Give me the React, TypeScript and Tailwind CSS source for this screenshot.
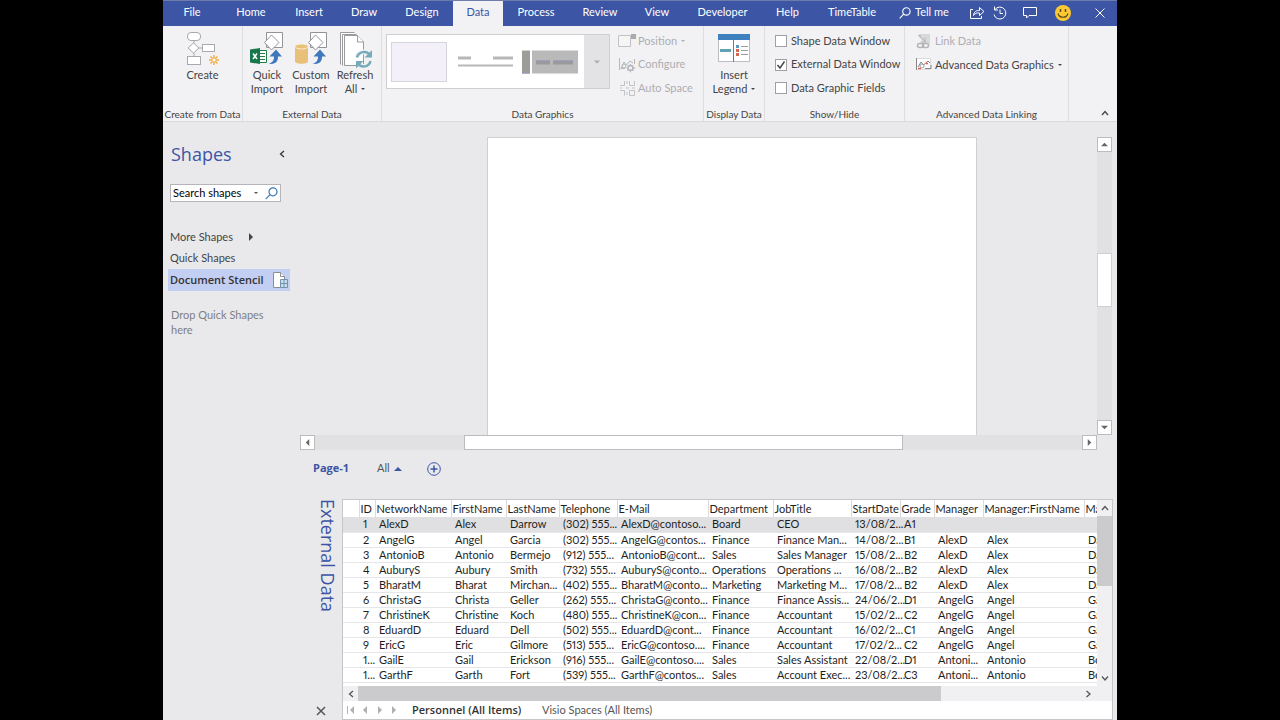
import { ReactNode, useState } from "react";

const RIBBON_TABS = [
  { label: "Home", width: "w-[60px]" },
  { label: "Insert", width: "w-[56px]" },
  { label: "Draw", width: "w-[54px]" },
  { label: "Design", width: "w-[62px]" },
  { label: "Data", width: "w-[50px]" },
  { label: "Process", width: "w-[66px]" },
  { label: "Review", width: "w-[62px]" },
  { label: "View", width: "w-[52px]" },
  { label: "Developer", width: "w-[79px]" },
  { label: "Help", width: "w-[51px]" },
  { label: "TimeTable", width: "w-[78px]" },
];

const COLUMNS = [
  { label: "", width: "w-[16px]" },
  { label: "ID", width: "w-[16px]" },
  { label: "NetworkName", width: "w-[76px]" },
  { label: "FirstName", width: "w-[55px]" },
  { label: "LastName", width: "w-[53px]" },
  { label: "Telephone", width: "w-[58px]" },
  { label: "E-Mail", width: "w-[91px]" },
  { label: "Department", width: "w-[65px]" },
  { label: "JobTitle", width: "w-[78px]" },
  { label: "StartDate", width: "w-[49px]" },
  { label: "Grade", width: "w-[34px]" },
  { label: "Manager", width: "w-[49px]" },
  { label: "Manager:FirstName", width: "w-[101px]" },
  { label: "Manager:LastName", width: "w-[101px]" },
];

const ROWS = [
  ["1", "AlexD", "Alex", "Darrow", "(302) 555...", "AlexD@contoso...", "Board", "CEO", "13/08/2...", "A1", "", "", ""],
  ["2", "AngelG", "Angel", "Garcia", "(302) 555...", "AngelG@contos...", "Finance", "Finance Man...", "14/08/2...", "B1", "AlexD", "Alex", "Darrow"],
  ["3", "AntonioB", "Antonio", "Bermejo", "(912) 555...", "AntonioB@cont...", "Sales", "Sales Manager", "15/08/2...", "B2", "AlexD", "Alex", "Darrow"],
  ["4", "AuburyS", "Aubury", "Smith", "(732) 555...", "AuburyS@conto...", "Operations", "Operations ...", "16/08/2...", "B2", "AlexD", "Alex", "Darrow"],
  ["5", "BharatM", "Bharat", "Mirchan...", "(402) 555...", "BharatM@conto...", "Marketing", "Marketing M...", "17/08/2...", "B2", "AlexD", "Alex", "Darrow"],
  ["6", "ChristaG", "Christa", "Geller", "(262) 555...", "ChristaG@conto...", "Finance", "Finance Assis...", "24/06/2...", "D1", "AngelG", "Angel", "Garcia"],
  ["7", "ChristineK", "Christine", "Koch", "(480) 555...", "ChristineK@con...", "Finance", "Accountant", "15/02/2...", "C2", "AngelG", "Angel", "Garcia"],
  ["8", "EduardD", "Eduard", "Dell", "(502) 555...", "EduardD@cont...", "Finance", "Accountant", "16/02/2...", "C1", "AngelG", "Angel", "Garcia"],
  ["9", "EricG", "Eric", "Gilmore", "(513) 555...", "EricG@contoso....", "Finance", "Accountant", "17/02/2...", "C2", "AngelG", "Angel", "Garcia"],
  ["1...", "GailE", "Gail", "Erickson", "(916) 555...", "GailE@contoso....", "Sales", "Sales Assistant", "22/08/2...", "D1", "Antoni...", "Antonio", "Bermejo"],
  ["1...", "GarthF", "Garth", "Fort", "(539) 555...", "GarthF@contos...", "Sales", "Account Exec...", "23/08/2...", "C3", "Antoni...", "Antonio", "Bermejo"],
];

const TRIANGLES = {
  up: "M0 6h8L4 2z",
  down: "M0 2h8L4 6z",
  left: "M6 0v8L2 4z",
  right: "M2 0v8l4-4z",
};

const Triangle = ({ dir, className = "size-2" }: { dir: keyof typeof TRIANGLES; className?: string }) => (
  <svg viewBox="0 0 8 8" fill="currentColor" className={`shrink-0 ${className}`} aria-hidden="true">
    <path d={TRIANGLES[dir]} />
  </svg>
);

const CHEVRONS = {
  up: "M1 6l3-3.500 3 3.500",
  down: "M1 2.500l3 3.500 3-3.500",
  left: "M6 1L2.500 4 6 7",
  right: "M2.500 1L6 4 2.500 7",
};

const Chevron = ({ dir, className = "size-2" }: { dir: keyof typeof CHEVRONS; className?: string }) => (
  <svg viewBox="0 0 8 8" fill="none" stroke="currentColor" strokeWidth="1.3" className={`shrink-0 ${className}`} aria-hidden="true">
    <path d={CHEVRONS[dir]} />
  </svg>
);

const CreateIcon = () => (
  <svg viewBox="0 0 34 34" className="h-[34px] w-[34px]" fill="#fff" stroke="#a9a9ad">
    <rect x="1.500" y=".5" width="13" height="8" rx="3.500" />
    <path d="M8 8.500v3M8 21v3M13 16h3" />
    <path d="M7.500 11l5.500 5-5.500 5L2 16z" />
    <rect x="16.500" y="12.500" width="12" height="7" />
    <rect x="1.500" y="24.500" width="13" height="8" />
    <path d="M28 23v3M28 30v3M23 28h3M30 28h3M24.500 24.500l2 2M29.500 29.500l2 2M31.500 24.500l-2 2M26.500 29.500l-2 2" stroke="#eeb04c" strokeWidth="1.500" />
    <circle cx="28" cy="28" r="2" stroke="#eeb04c" />
  </svg>
);

const ShapeSheet = () => (
  <g fill="#fff" stroke="#929296">
    <path d="M16.500.500h16v15h-16z" />
    <path d="M21.500 3l7.500 7.500-7.500 7.500-7-7.500z" />
  </g>
);

const ArrowUpCurve = () => (
  <path
    d="M18.500 31.500c4-.5 5.500-3 5.500-7h-4.500l6.500-7 6 7h-4c.3 5.500-3.500 8.500-9.500 7z"
    fill="#3f79bd"
  />
);

const QuickImportIcon = () => (
  <svg viewBox="0 0 34 34" className="h-[34px] w-[34px]">
    <ShapeSheet />
    <path d="M8 18.500h8.500v12H8z" fill="#fff" stroke="#217c4a" />
    <path d="M10 21.500h5M10 24.500h5M10 27.500h5" stroke="#217c4a" />
    <path d="M0 17.500l10-1.500v16L0 30.500z" fill="#18774a" />
    <path d="M3 21.500l4 5.500M7 21.500L3 27" stroke="#fff" strokeWidth="1.500" />
    <ArrowUpCurve />
  </svg>
);

const CustomImportIcon = () => (
  <svg viewBox="0 0 34 34" className="h-[34px] w-[34px]">
    <ShapeSheet />
    <path d="M1 14v15c0 1.800 3 2.800 6.500 2.800S14 30.800 14 29V14z" fill="#e8c078" />
    <ellipse cx="7.500" cy="14.500" rx="6.500" ry="2.500" fill="#e8c078" stroke="#f8ecd4" />
    <ArrowUpCurve />
  </svg>
);

const RefreshIcon = () => (
  <svg viewBox="0 0 34 36" className="h-[36px] w-[34px]">
    <g fill="#fff" stroke="#9a9a9e">
      <path d="M2.500 32.500V.500h14" />
      <path d="M4.500 33.500v-31h14" />
      <path d="M6.500 33.500v-30h13l6 6.500v23.500z" />
      <path d="M19.500 3.500v6.500h6" />
    </g>
    <g fill="none" stroke="#f2f2f5" strokeWidth="5">
      <path d="M19 25.500c1.500-7 10.500-7 13.500-2M32.500 29.500c-2 6.500-10 6.500-13 1.500" />
    </g>
    <g fill="none" stroke="#76abb9" strokeWidth="2.500">
      <path d="M19 25.500c1.500-6.500 9.500-7 13-2.500M32.500 29c-1.500 6.500-9.500 7-13 2.500" />
    </g>
    <path d="M34 18v7.500h-7.500zM18 36.500V29h7.500z" fill="#76abb9" />
  </svg>
);

const LegendIcon = () => (
  <svg viewBox="0 0 32 28" className="mt-0.5 h-[28px] w-[32px]">
    <path d="M.5.500h31v27H.5z" fill="#fff" stroke="#bdbdc1" />
    <path d="M0 0h32v6H0z" fill="#3f80bf" />
    <path d="M15.500 6v22" stroke="#77777b" />
    <path d="M2 16.500h11" stroke="#62a0b4" strokeWidth="3" />
    <path d="M18 12.500h3" stroke="#5a9bc4" strokeWidth="3" />
    <path d="M18 16.500h3M18 20.500h3" stroke="#d5694f" strokeWidth="3" />
    <path d="M23 12.500h7M23 16.500h7M23 20.500h7" stroke="#9b9b9f" />
  </svg>
);

const PositionIcon = () => (
  <svg viewBox="0 0 18 14" className="h-[14px] w-[18px]">
    <path d="M.5 1.500h12v11H.5z" fill="#f5f5f6" stroke="#c2c2c4" />
    <path d="M13 0h5v5h-5z" fill="#aaaaac" />
  </svg>
);

const ConfigureIcon = () => (
  <svg viewBox="0 0 18 16" className="h-[16px] w-[18px]" fill="none" stroke="#b6b6b9">
    <path d="M1.500 1v12M16.500 2v5M3 12l3-7 2.500 3L12 4l3 2M3 11.500h4" />
    <circle cx="6" cy="9" r="2" />
    <circle cx="12.500" cy="11" r="2.500" strokeWidth="1.500" />
    <path d="M12.500 7v2M12.500 13v2.500M8.500 11h2M15 11h2.500M10 8.500l1 1M14 12.500l1.500 1.500M15 8.500l-1 1M11 12.500L9.500 14" />
  </svg>
);

const AdvancedGraphicsIcon = () => (
  <svg viewBox="0 0 18 14" className="h-[14px] w-[18px]" fill="none" stroke="#a2a2a6">
    <path d="M1.500.500h14v11h-14z" fill="#fdfdfd" stroke="#dcdcdf" />
    <path d="M1.500 0v12M3 9l3-5 2.500 3L13 3l2 2M10 10.500h6V7" stroke="#85858a" />
    <circle cx="7" cy="8" r="2" />
    <path d="M3 10.500h3M11 5.500h2" stroke="#dc674c" strokeWidth="1.500" />
  </svg>
);

const AutoSpaceIcon = () => (
  <svg viewBox="0 0 18 18" className="h-[18px] w-[18px]" fill="none" stroke="#c3c3c6">
    <path d="M6.500 2v4.500H2M11.500 2v4.500h5V2M6.500 16.500v-5H2M11.500 11.500h5v5h-5zM2 9h2M8 9h3M14 9h3M9 2v3M9 13v3" />
  </svg>
);

const LinkDataIcon = () => (
  <svg viewBox="0 0 16 16" className="h-[16px] w-[16px]" fill="none" stroke="#b4b4b7">
    <path d="M3 1h11v10H7z" fill="#d9d9db" stroke="none" />
    <path d="M2 2l8 7M9 4.500V9H4.500M4 1.500v3" />
    <rect x="1.500" y="10.500" width="6" height="4" rx="2" strokeWidth="1.500" />
    <rect x="6.500" y="10.500" width="6" height="4" rx="2" strokeWidth="1.500" />
  </svg>
);

const SearchIcon = ({ className }: { className: string }) => (
  <svg viewBox="0 0 13 13" fill="none" stroke="currentColor" strokeWidth="1.200" className={className} aria-hidden="true">
    <circle cx="8" cy="4.800" r="4" />
    <path d="M5 7.700L.7 12.200" />
  </svg>
);

const StencilIcon = () => (
  <svg viewBox="0 0 16 17" className="h-[17px] w-[16px]" fill="#fff" stroke="#8c8c92">
    <path d="M.5.500h7l4 4v11H.5z" />
    <path d="M7.500.500v4h4" />
    <path d="M7.500 7.500h7v8h-7zM11 7.500v8M7.500 11.500h7" fill="#c9dcec" stroke="#7393ad" />
  </svg>
);

type GroupProps = { label: string; className: string; children: ReactNode };

const RibbonGroup = ({ label, className, children }: GroupProps) => (
  <section className={`flex shrink-0 flex-col justify-between border-r border-[#dedee1] pb-px ${className}`}>
    <div className="flex h-[74px]">{children}</div>
    <h2 className="text-center text-[10px] leading-3 whitespace-nowrap text-[#444]">{label}</h2>
  </section>
);

const BigButton = ({ icon, lines, menu, className }: { icon: ReactNode; lines: string[]; menu?: boolean; className: string }) => (
  <button type="button" className={`flex flex-col items-center pt-1.5 ${className}`}>
    <span className="flex h-9 items-start">{icon}</span>
    {lines.map((line, index) => (
      <span key={line} className="flex items-center gap-1 leading-[14px] whitespace-nowrap">
        {line}
        {menu && index === lines.length - 1 && <Triangle dir="down" className="size-1" />}
      </span>
    ))}
  </button>
);

const SmallButton = ({ icon, label, menu, disabled }: { icon: ReactNode; label: string; menu?: boolean; disabled?: boolean }) => (
  <button
    type="button"
    disabled={disabled}
    className="flex h-6 items-center gap-0.5 whitespace-nowrap disabled:text-[#aeaeb1]"
  >
    <span className="flex w-[18px] justify-center">{icon}</span>
    {label}
    {menu && <Triangle dir="down" className="ml-0.5 size-1" />}
  </button>
);

const Check = ({ label, defaultChecked }: { label: string; defaultChecked?: boolean }) => (
  <label className="flex h-6 items-center gap-1 whitespace-nowrap">
    <span className="grid size-3 shrink-0 place-items-center">
      <input
        type="checkbox"
        defaultChecked={defaultChecked}
        className="peer col-start-1 row-start-1 size-3 appearance-none border border-[#a0a0a4] bg-white"
      />
      <svg viewBox="0 0 12 12" fill="none" stroke="#444" strokeWidth="1.400" className="pointer-events-none invisible col-start-1 row-start-1 size-3 peer-checked:visible">
        <path d="M2.500 6l2.500 3 4.500-6.500" />
      </svg>
    </span>
    {label}
  </label>
);

const TitleActions = () => (
  <div className="flex flex-1 items-center justify-between pb-0.5 text-white">
    <button type="button" className="flex items-center gap-1 pl-2 whitespace-nowrap">
      <SearchIcon className="size-3" />
      Tell me
    </button>
    <div className="flex items-center pr-3">
      <button type="button" aria-label="Share" className="mr-2">
        <svg viewBox="0 0 15 13" className="h-[13px] w-[15px]" fill="none" stroke="currentColor">
          <path d="M3 3.500H.5v9h11V10" />
          <path d="M3.500 9.500c.5-4 2.500-5 6-5V1.500L14 5.500 9.500 9.500V7c-3-.5-4.500.5-6 2.500z" />
        </svg>
      </button>
      <button type="button" aria-label="History" className="mr-4">
        <svg viewBox="0 0 14 14" className="size-[14px]" fill="none" stroke="currentColor">
          <path d="M2 3.500a6 6 0 1 1-1 5M1.500.500v3.500H5M7 3.500v4h3" />
        </svg>
      </button>
      <button type="button" aria-label="Comments" className="mr-[18px]">
        <svg viewBox="0 0 14 12" className="h-[12px] w-[14px]" fill="none" stroke="currentColor">
          <path d="M.5.500h13v8H6L3.500 11V8.500h-3z" />
        </svg>
      </button>
      <button type="button" aria-label="Feedback" className="mr-6">
        <svg viewBox="0 0 16 16" className="size-4">
          <circle cx="8" cy="8" r="8" fill="#fcc932" />
          <path d="M5.500 4v3M10.500 4v3" stroke="#5b4a1c" strokeWidth="1.500" />
          <path d="M3 8.500c1.500 5 8.500 5 10 0" fill="none" stroke="#5b4a1c" strokeWidth="1.200" />
        </svg>
      </button>
      <button type="button" aria-label="Close">
        <svg viewBox="0 0 10 10" className="size-[10px]" fill="none" stroke="currentColor">
          <path d="M.5.500l9 9M9.500.500l-9 9" />
        </svg>
      </button>
    </div>
  </div>
);

const TabBar = () => {
  const [active, setActive] = useState("Data");

  return (
    <nav className="flex h-[26px] border-t border-[#6d7cab] bg-[#3c55a5] text-white">
      <button type="button" className="w-[58px] shrink-0 pb-0.5">
        File
      </button>
      {RIBBON_TABS.map((tab) => (
        <button
          type="button"
          key={tab.label}
          onClick={() => setActive(tab.label)}
          className={`shrink-0 pb-0.5 ${tab.width} ${active === tab.label ? "bg-[#f2f2f5] text-[#3c55a5]" : ""}`}
        >
          {tab.label}
        </button>
      ))}
      <TitleActions />
    </nav>
  );
};

const GraphicsGallery = () => (
  <div className="mt-2 ml-1 flex h-[55px] w-[224px] border border-[#cfcfd2] bg-white">
    <button type="button" aria-label="No data graphic" className="mt-[7px] ml-1 h-10 w-[56px] border border-[#d5d5dc] bg-[#f3f0fa]" />
    <button type="button" aria-label="Text callout" className="ml-2.5">
      <svg viewBox="0 0 56 16" className="h-[16px] w-[56px]">
        <path d="M1 4h13M36 4h20" stroke="#b7b7b9" strokeWidth="3" />
        <path d="M1 11.500h55" stroke="#b7b7b9" strokeWidth="2" />
      </svg>
    </button>
    <button type="button" aria-label="Data bar" className="ml-[9px]">
      <svg viewBox="0 0 56 24" className="h-[24px] w-[56px]">
        <path d="M0 .500h8v23H0z" fill="#9c9c99" />
        <path d="M10 .500h46v23H10z" fill="#b9b9ba" />
        <path d="M14 12.500h14M31 12.500h20" stroke="#9a9a9c" strokeWidth="4" />
        <path d="M14 11h14M31 11h20M0 23h8" stroke="#9496b8" />
      </svg>
    </button>
    <button type="button" aria-label="More data graphics" className="ml-auto flex w-[25px] items-center justify-center bg-[#e3e3e5] text-[#aaaaad]">
      <Triangle dir="down" className="size-1.5" />
    </button>
  </div>
);

const Ribbon = () => (
  <div className="flex h-24 border-b border-[#d9d9dc] bg-[#f2f2f5] text-[#444]">
    <RibbonGroup label="Create from Data" className="w-[80px]">
      <BigButton icon={<CreateIcon />} lines={["Create"]} className="w-full" />
    </RibbonGroup>
    <RibbonGroup label="External Data" className="w-[139px]">
      <BigButton icon={<QuickImportIcon />} lines={["Quick", "Import"]} className="w-[48px]" />
      <BigButton icon={<CustomImportIcon />} lines={["Custom", "Import"]} className="w-[40px]" />
      <BigButton icon={<RefreshIcon />} lines={["Refresh", "All"]} menu className="w-[48px]" />
    </RibbonGroup>
    <RibbonGroup label="Data Graphics" className="w-[322px]">
      <GraphicsGallery />
      <div className="ml-2 flex flex-col pt-[3px]">
        <SmallButton icon={<PositionIcon />} label="Position" menu disabled />
        <SmallButton icon={<ConfigureIcon />} label="Configure" disabled />
        <SmallButton icon={<AutoSpaceIcon />} label="Auto Space" disabled />
      </div>
    </RibbonGroup>
    <RibbonGroup label="Display Data" className="w-[61px]">
      <BigButton icon={<LegendIcon />} lines={["Insert", "Legend"]} menu className="w-full" />
    </RibbonGroup>
    <RibbonGroup label="Show/Hide" className="w-[140px]">
      <div className="flex flex-col pt-[3px] pl-2.5">
        <Check label="Shape Data Window" />
        <Check label="External Data Window" defaultChecked />
        <Check label="Data Graphic Fields" />
      </div>
    </RibbonGroup>
    <RibbonGroup label="Advanced Data Linking" className="w-[164px]">
      <div className="flex flex-col pt-[3px] pl-2.5">
        <SmallButton icon={<LinkDataIcon />} label="Link Data" disabled />
        <SmallButton icon={<AdvancedGraphicsIcon />} label="Advanced Data Graphics" menu />
      </div>
    </RibbonGroup>
    <button type="button" aria-label="Collapse ribbon" className="mt-auto mr-1 ml-auto p-1">
      <Chevron dir="up" />
    </button>
  </div>
);

const ShapesPanel = () => (
  <aside className="flex w-[137px] shrink-0 flex-col text-[#5a5a5e]">
    <div className="flex items-center justify-between pt-5 pr-3.5 pl-2">
      <h2 className="font-['Open_Sans',sans-serif] text-[18px] leading-6 text-[#3c55a5]">Shapes</h2>
      <button type="button" aria-label="Collapse shapes" className="text-[#333]">
        <Chevron dir="left" />
      </button>
    </div>
    <div className="mt-[18px] ml-[7px] flex h-[18px] w-[111px] items-center border border-[#b5b5b9] bg-white text-black">
      <input aria-label="Search shapes" defaultValue="Search shapes" className="w-[83px] pl-0.5 outline-none" />
      <button type="button" aria-label="Search options" className="text-[#555]">
        <Triangle dir="down" className="size-1" />
      </button>
      <button type="button" aria-label="Search" className="mr-0.5 ml-auto text-[#3b78b5]">
        <SearchIcon className="size-[13px]" />
      </button>
    </div>
    <button type="button" className="mt-6 flex h-[22px] items-center gap-3.5 pl-[7px] text-[#444]">
      More Shapes
      <Triangle dir="right" />
    </button>
    <button type="button" className="h-[21px] pl-[7px] text-left text-[#444]">
      Quick Shapes
    </button>
    <button
      type="button"
      className="mr-2.5 ml-[5px] flex h-[22px] items-center justify-between bg-[#c2cef2] pr-px pl-0.5 font-['Open_Sans',sans-serif] font-semibold whitespace-nowrap text-[#333]"
    >
      Document Stencil
      <StencilIcon />
    </button>
    <p className="mt-4 mr-5 ml-2 leading-[15px] text-[#7e7e84]">Drop Quick Shapes here</p>
  </aside>
);

const ScrollButton = ({ dir }: { dir: keyof typeof TRIANGLES }) => (
  <button
    type="button"
    aria-label={`Scroll ${dir}`}
    className="flex size-[15px] shrink-0 items-center justify-center border border-[#bcbcbf] bg-white text-[#666]"
  >
    <Triangle dir={dir} className="size-[7px]" />
  </button>
);

const DrawingArea = () => (
  <div className="flex flex-1 flex-col pt-[15px]">
    <div className="flex flex-1">
      <div className="flex flex-1 justify-center pr-[120px] pl-[187px]">
        <div className="flex-1 border-x border-t border-[#cfcfd3] bg-white" />
      </div>
      <div className="mr-[5px] flex w-[15px] flex-col bg-[#e1e1e3]">
        <ScrollButton dir="up" />
        <div className="flex flex-1 flex-col pt-[101px]">
          <div className="h-[54px] border border-[#d0d0d3] bg-white" />
        </div>
        <ScrollButton dir="down" />
      </div>
    </div>
    <div className="mr-5 flex bg-[#e1e1e3]">
      <ScrollButton dir="left" />
      <div className="flex flex-1 pl-[149px]">
        <div className="w-[439px] border border-[#bcbcbf] bg-white" />
      </div>
      <ScrollButton dir="right" />
    </div>
  </div>
);

const PageTabs = () => (
  <div className="flex h-[49px] items-center pb-3 pl-[13px]">
    <button type="button" className="w-[50px] text-left font-['Open_Sans',sans-serif] font-bold text-[#3c55a5]">
      Page-1
    </button>
    <button type="button" className="flex w-[64px] items-center gap-1 pl-3.5 text-[#555]">
      All
      <Triangle dir="up" className="size-2 text-[#3c55a5]" />
    </button>
    <button type="button" aria-label="Insert page" className="text-[#3c55a5]">
      <svg viewBox="0 0 14 14" className="size-[14px]" fill="none" stroke="currentColor">
        <circle cx="7" cy="7" r="6.300" />
        <path d="M7 3.500v7M3.500 7h7" strokeWidth="1.500" />
      </svg>
    </button>
  </div>
);

const DataTable = () => (
  <table className="w-[842px] table-fixed border-collapse text-left whitespace-nowrap text-[#1e1e1e] proportional-nums">
    <thead>
      <tr className="h-[17px]">
        {COLUMNS.map((column) => (
          <th
            key={column.label}
            scope="col"
            className={`border-r border-[#dadadd] p-0 pl-px leading-[17px] font-normal ${column.width}`}
          >
            {column.label}
          </th>
        ))}
      </tr>
    </thead>
    <tbody>
      {ROWS.map((row, rowIndex) => (
        <tr key={row[1]} className={`h-[15px] border-b border-[#e6e6e8] ${rowIndex === 0 ? "bg-[#e0e0e3]" : ""}`}>
          <td className="p-0" />
          {row.map((cell, cellIndex) => (
            <td key={cellIndex} className="p-0 pl-1 leading-[14px]">
              {cell}
            </td>
          ))}
        </tr>
      ))}
    </tbody>
  </table>
);

const ExternalData = () => (
  <section className="flex h-[221px] shrink-0">
    <div className="flex w-[42px] shrink-0 flex-col items-center justify-between pb-1">
      <h2 className="self-end font-['Open_Sans',sans-serif] text-[18px] leading-[28px] whitespace-nowrap text-[#3c55a5] [writing-mode:vertical-rl]">
        External Data
      </h2>
      <button type="button" aria-label="Close external data" className="text-[#555]">
        <svg viewBox="0 0 10 10" className="size-[10px]" fill="none" stroke="currentColor" strokeWidth="1.500">
          <path d="M1 1l8 8M9 1L1 9" />
        </svg>
      </button>
    </div>
    <div className="mr-1 flex min-w-0 flex-1 flex-col border border-[#c6c6c9] bg-white">
      <div className="flex h-[186px]">
        <div className="min-w-0 flex-1 overflow-hidden">
          <DataTable />
        </div>
        <div className="flex w-[15px] shrink-0 flex-col items-center bg-[#f0f0f3] text-[#555]">
          <button type="button" aria-label="Rows up" className="flex h-4 items-center">
            <Chevron dir="up" />
          </button>
          <div className="h-[70px] w-full bg-[#cbcbcd]" />
          <button type="button" aria-label="Rows down" className="mt-auto flex h-4 items-center">
            <Chevron dir="down" />
          </button>
        </div>
      </div>
      <div className="flex h-[15px] items-center bg-[#f0f0f3] text-[#555]">
        <button type="button" aria-label="Columns left" className="flex w-[15px] justify-center">
          <Chevron dir="left" />
        </button>
        <div className="h-full w-[583px] bg-[#cbcbcd]" />
        <button type="button" aria-label="Columns right" className="mr-5 ml-auto">
          <Chevron dir="right" />
        </button>
      </div>
      <div className="flex flex-1 items-center whitespace-nowrap text-[#555]">
        <div className="flex w-[63px] justify-between pr-2 pl-1 text-[#b0b0b3]">
          <button type="button" aria-label="First sheet">
            <svg viewBox="0 0 8 8" className="size-2" fill="currentColor">
              <path d="M0 0h1v8H0zM7 0v8L3 4z" />
            </svg>
          </button>
          <button type="button" aria-label="Previous sheet">
            <Triangle dir="left" />
          </button>
          <button type="button" aria-label="Next sheet">
            <Triangle dir="right" />
          </button>
          <button type="button" aria-label="Last sheet">
            <Triangle dir="right" />
          </button>
        </div>
        <button type="button" className="w-[128px] pl-1.5 text-left font-['Open_Sans',sans-serif] font-semibold text-[#333]">
          Personnel (All Items)
        </button>
        <button type="button" className="pl-2">
          Visio Spaces (All Items)
        </button>
      </div>
    </div>
  </section>
);

const App = () => (
  <div className="flex min-h-screen justify-center bg-black font-[Lato,sans-serif] text-[11px]">
    <main className="flex w-full max-w-[954px] flex-col bg-[#e9e9eb]">
      <TabBar />
      <Ribbon />
      <div className="flex flex-1">
        <ShapesPanel />
        <div className="flex min-w-0 flex-1 flex-col">
          <DrawingArea />
          <PageTabs />
          <ExternalData />
        </div>
      </div>
    </main>
  </div>
);

export default App;
